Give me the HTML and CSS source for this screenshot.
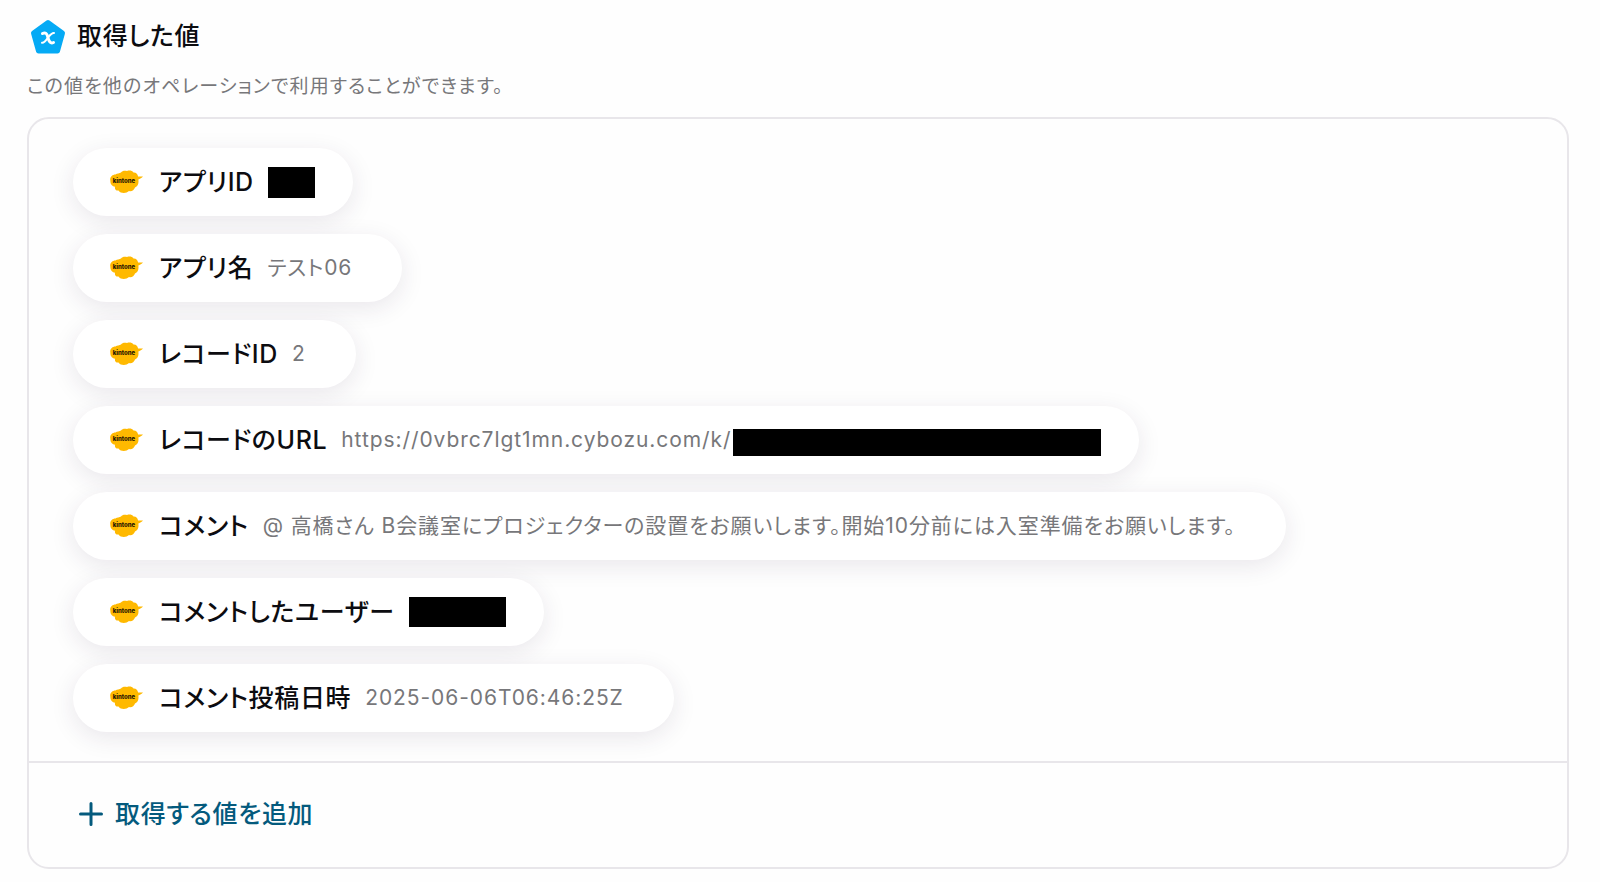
FILE: index.html
```html
<!DOCTYPE html>
<html lang="ja">
<head>
    <meta charset="UTF-8">
    <meta name="viewport" content="width=device-width, initial-scale=1.0">
    <title>取得した値</title>
    <link rel="stylesheet" href="styles.css">
</head>
<body>
    <!-- shared kintone logo -->
    <svg class="defs" aria-hidden="true">
        <symbol id="kintone" viewBox="0 0 33 24">
            <path fill="#ffb900" d="M5.500 4.500C7 3.200 9.500 3.800 11 2.600C12 .6 15 .3 17 1C19.500 .2 22 .6 23.500 2.400C26 2.200 28 4 28 6.600L33 6.600C31.800 8 30 9 28.300 9.500C29 13 28 16.500 25 17.500C24 20.300 21.500 21.800 19 21C16.500 23.500 11 24 8.500 20.500C6 21 4.500 19 5 16.800C2 16.200 0 14 .4 11C-.6 7.500 2 4.500 5.500 4.500Z"/>
            <text class="logo-text" x="14" y="13" text-anchor="middle">kintone</text>
        </symbol>
    </svg>

    <main class="page">
        <header class="header">
            <h1 class="title">
                <svg class="title-icon" viewBox="0 0 36 36" aria-hidden="true">
                    <path d="M18 3.500L32.500 14L27.500 32H8.500L3.500 14Z" fill="#05aaf5" stroke="#05aaf5" stroke-width="5" stroke-linejoin="round"/>
                    <path d="M12.500 14.500C15.500 13 17 14.500 17.800 18C18.800 22.500 20.500 25 23.500 23.500" fill="none" stroke="#fff" stroke-width="3" stroke-linecap="round"/>
                    <path d="M24 14C21.500 13.800 20 16 17.800 18.800C16 21.500 14.500 24 12 23.800" fill="none" stroke="#fff" stroke-width="2" stroke-linecap="round"/>
                </svg>
                <span>取得した値</span>
            </h1>
            <p class="description">この値を他のオペレーションで利用することができます。</p>
        </header>

        <section class="card">
            <ul class="values">
                <li class="chip redacted">
                    <svg class="logo"><use href="#kintone"/></svg>
                    <span class="label">アプリID</span>
                    <span class="value"><span class="mask mask-id"></span></span>
                </li>
                <li class="chip">
                    <svg class="logo"><use href="#kintone"/></svg>
                    <span class="label">アプリ名</span>
                    <span class="value">テスト06</span>
                </li>
                <li class="chip">
                    <svg class="logo"><use href="#kintone"/></svg>
                    <span class="label">レコードID</span>
                    <span class="value">2</span>
                </li>
                <li class="chip redacted">
                    <svg class="logo"><use href="#kintone"/></svg>
                    <span class="label">レコードのURL</span>
                    <span class="value">https://0vbrc7lgt1mn.cybozu.com/k/<span class="mask mask-url"></span></span>
                </li>
                <li class="chip">
                    <svg class="logo"><use href="#kintone"/></svg>
                    <span class="label">コメント</span>
                    <span class="value">@ 高橋さん B会議室にプロジェクターの設置をお願いします。開始10分前には入室準備をお願いします。</span>
                </li>
                <li class="chip redacted">
                    <svg class="logo"><use href="#kintone"/></svg>
                    <span class="label">コメントしたユーザー</span>
                    <span class="value"><span class="mask mask-user"></span></span>
                </li>
                <li class="chip">
                    <svg class="logo"><use href="#kintone"/></svg>
                    <span class="label">コメント投稿日時</span>
                    <span class="value">2025-06-06T06:46:25Z</span>
                </li>
            </ul>
            <div class="footer">
                <button class="add-btn" type="button">
                    <svg class="plus" viewBox="0 0 24 24" aria-hidden="true"><path d="M12 1.500V22.500M1.500 12H22.500" fill="none" stroke="currentColor" stroke-width="3" stroke-linecap="round"/></svg>
                    <span>取得する値を追加</span>
                </button>
            </div>
        </section>
    </main>
</body>
</html>
```

FILE: styles.css
```css
* {
    margin: 0;
    padding: 0;
    box-sizing: border-box;
}

body {
    background: #fefefe;
    color: #0c0c10;
    font-family: Inter, "Noto Sans CJK JP", sans-serif;
    font-feature-settings: "palt";
    letter-spacing: 0.04em;
}

.defs {
    display: none;
}

.logo-text {
    font-size: 6px;
    font-weight: 800;
    letter-spacing: 0;
    fill: #1d1300;
}

.page {
    padding: 19px 31px 14px 27px;
}

.title {
    display: flex;
    align-items: flex-start;
    gap: 11px;
    height: 36px;
    padding-left: 3px;
    font-size: 25px;
    font-weight: 500;
    line-height: 34px;
}

.title-icon {
    width: 36px;
    height: 36px;
}

.description {
    margin-top: 18px;
    margin-bottom: 16px;
    font-size: 19px;
    line-height: 28px;
    letter-spacing: 0.06em;
    color: #77777a;
}

.card {
    border: 2px solid #e8e6ea;
    border-radius: 22px;
}

.values {
    display: flex;
    flex-direction: column;
    align-items: flex-start;
    gap: 18px;
    padding: 29px 44px;
    list-style: none;
}

.chip {
    display: flex;
    align-items: center;
    min-height: 68px;
    padding: 0 50px 0 37px;
    border-radius: 34px;
    background: #fff;
    box-shadow: 0 6px 24px rgba(50, 30, 70, 0.1);
}

.chip.redacted {
    padding-right: 38px;
}

.logo {
    flex: none;
    width: 33px;
    height: 24px;
    margin-right: 16px;
}

.label {
    flex: none;
    margin-right: 14px;
    font-size: 25px;
    font-weight: 500;
    line-height: 32px;
}

.value {
    display: flex;
    align-items: flex-end;
    font-size: 21px;
    line-height: 32px;
    letter-spacing: 0.044em;
    color: #77777a;
}

.mask {
    background: #000;
}

.mask-id {
    width: 47px;
    height: 31px;
}

.mask-url {
    width: 368px;
    height: 27px;
    margin-left: 2px;
}

.mask-user {
    align-self: flex-start;
    width: 97px;
    height: 30px;
}

.footer {
    padding: 32px 50px;
    border-top: 2px solid #e8e6ea;
}

.add-btn {
    display: flex;
    align-items: flex-start;
    gap: 12px;
    height: 40px;
    padding-top: 7px;
    border: none;
    background: none;
    color: #045a7d;
    font: inherit;
    font-size: 25px;
    font-weight: 500;
    line-height: 24px;
    font-feature-settings: inherit;
    letter-spacing: inherit;
    cursor: pointer;
}

.plus {
    width: 24px;
    height: 24px;
}
```
